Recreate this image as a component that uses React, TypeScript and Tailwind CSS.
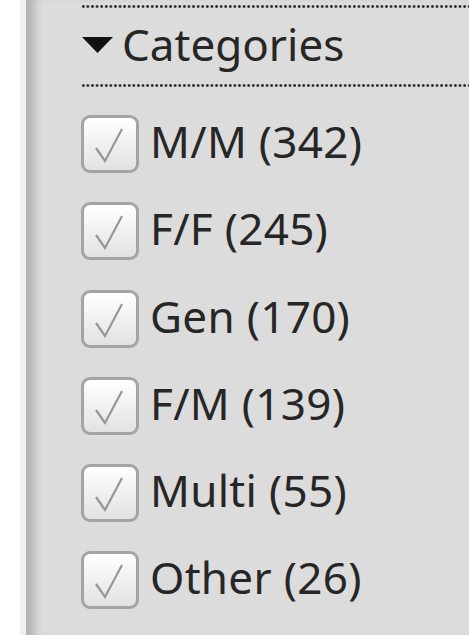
const categories = [
  { label: "M/M", count: 342 },
  { label: "F/F", count: 245 },
  { label: "Gen", count: 170 },
  { label: "F/M", count: 139 },
  { label: "Multi", count: 55 },
  { label: "Other", count: 26 },
];

function DottedRule() {
  return (
    <div className="h-[3px] w-full bg-[radial-gradient(circle,#2a2a2a_1.1px,transparent_1.6px)] bg-[length:4.6px_3px] bg-repeat-x" />
  );
}

function CheckBox() {
  return (
    <div className="flex h-[58px] w-[58px] shrink-0 items-center justify-center rounded-[9px] border-[3px] border-[#a4a4a4] bg-gradient-to-b from-white to-[#e2e2e2]">
      <svg width="58" height="58" viewBox="0 0 58 58" className="-m-[3px]">
        <polyline
          points="15,33 24,46 41,14"
          fill="none"
          stroke="#969696"
          strokeWidth="2.2"
          strokeLinejoin="miter"
        />
      </svg>
    </div>
  );
}

export default function App() {
  return (
    <div className="flex h-[635px] w-[469px] overflow-hidden bg-white font-['Noto_Sans',sans-serif] text-[#262626]">
      <div className="w-[20px] shrink-0 bg-white" />
      <div className="w-[6px] shrink-0 bg-[#f3f0ed]" />
      <div className="flex-1 bg-[#dcdcdc] pl-[55px] pt-[5px] shadow-[inset_14px_0_10px_-6px_rgba(0,0,0,0.2)]">
        <DottedRule />
        <div className="flex h-[76px] items-center gap-[9px]">
          <svg width="31" height="16" viewBox="0 0 31 16" className="ml-[1px] mt-[-2px]">
            <polygon points="0,0 31,0 15.5,16" fill="#111" />
          </svg>
          <span className="mb-[4px] text-[44px] leading-none">Categories</span>
        </div>
        <DottedRule />
        <div className="flex flex-col gap-[29.3px] pt-[28px]">
          {categories.map((c) => (
            <div key={c.label} className="flex items-center gap-[11px]">
              <CheckBox />
              <span className="mb-[6px] text-[44px] leading-none tracking-[0.3px]">
                {c.label} ({c.count})
              </span>
            </div>
          ))}
        </div>
      </div>
    </div>
  );
}
